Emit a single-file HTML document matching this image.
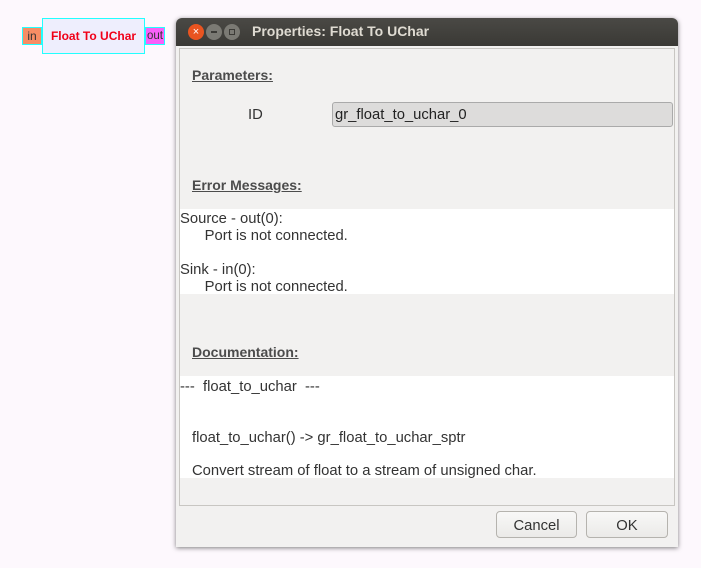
<!DOCTYPE html>
<html><head><style>
body{margin:0;width:701px;height:568px;background:#fdf8fd;position:relative;overflow:hidden;font-family:"Liberation Sans",sans-serif;}
.a{position:absolute;}
.t{font-size:14px;color:#3c3c3c;}
.b{font-size:14.8px;color:#333;}
</style></head><body>
<div class="a" style="left:22px;top:27px;width:18px;height:16px;background:#f78d64;border:1px solid #2ff;font-size:12px;line-height:16px;text-align:center;color:#333">in</div>
<div class="a" style="left:42px;top:18px;width:101px;height:34px;background:#eeeefd;border:1px solid #2ff;font-size:12px;font-weight:bold;color:#f00018;line-height:34px;text-align:center">Float To UChar</div>
<div class="a" style="left:145px;top:27px;width:18px;height:16px;background:#f960f9;border:1px solid #2ff;font-size:11.5px;line-height:16px;text-align:center;color:#333">out</div>

<div class="a" style="left:176px;top:18px;width:502px;height:529px;background:#f2f1f0;border-radius:6px 6px 0 0;box-shadow:0 1px 5px rgba(0,0,0,.5)">
 <div class="a" style="left:0;top:0;width:502px;height:28px;background:linear-gradient(#4a4945,#3a3935);border-radius:6px 6px 0 0"></div>
 <div class="a" style="left:12px;top:6px;width:16px;height:16px;border-radius:50%;background:#e95420;color:#fff;font-size:11px;line-height:16px;text-align:center">×</div>
 <div class="a" style="left:30px;top:6px;width:16px;height:16px;border-radius:50%;background:#7b7a74"><div class="a" style="left:5px;top:7px;width:6px;height:2px;background:#3c3b37"></div></div>
 <div class="a" style="left:48px;top:6px;width:16px;height:16px;border-radius:50%;background:#7b7a74"><div class="a" style="left:5px;top:5px;width:4px;height:4px;border:1px solid #3c3b37"></div></div>
 <div class="a" style="left:76px;top:5px;font-size:14px;font-weight:bold;color:#dfdbd2">Properties: Float To UChar</div>
 <div class="a" style="left:3px;top:30px;width:494px;height:456px;border:1px solid #c8c6c2;background:#f2f1f0">
  <div class="a t" style="left:12px;top:18px;font-weight:bold;text-decoration:underline;color:#4c4c4c">Parameters:</div>
  <div class="a b" style="left:68px;top:58px">ID</div>
  <div class="a" style="left:152px;top:53px;width:339px;height:23px;background:#dddcdb;border:1px solid #aaa;border-radius:3px;font-size:14.8px;line-height:25px;color:#222;text-indent:2px">gr_float_to_uchar_0</div>
  <div class="a t" style="left:12px;top:128px;font-weight:bold;text-decoration:underline;color:#4c4c4c">Error Messages:</div>
  <div class="a" style="left:0;top:160px;width:494px;height:85px;background:#fff"></div>
  <div class="a b" style="left:0;top:162px;line-height:17px">Source - out(0):<br>&nbsp;&nbsp;&nbsp;&nbsp;&nbsp;&nbsp;Port is not connected.<br><br>Sink - in(0):<br>&nbsp;&nbsp;&nbsp;&nbsp;&nbsp;&nbsp;Port is not connected.</div>
  <div class="a t" style="left:12px;top:295px;font-weight:bold;text-decoration:underline;color:#4c4c4c">Documentation:</div>
  <div class="a" style="left:0;top:327px;width:494px;height:102px;background:#fff"></div>
  <div class="a b" style="left:0;top:330px">---&nbsp;&nbsp;float_to_uchar&nbsp;&nbsp;---</div>
  <div class="a b" style="left:12px;top:381px">float_to_uchar() -&gt; gr_float_to_uchar_sptr</div>
  <div class="a b" style="left:12px;top:414px">Convert stream of float to a stream of unsigned char.</div>
 </div>
 <div class="a b" style="left:320px;top:493px;width:79px;height:25px;border:1px solid #b5b3ae;border-radius:4px;background:linear-gradient(#f8f8f7,#ebeae8);text-align:center;line-height:28px">Cancel</div>
 <div class="a b" style="left:410px;top:493px;width:80px;height:25px;border:1px solid #b5b3ae;border-radius:4px;background:linear-gradient(#f8f8f7,#ebeae8);text-align:center;line-height:28px">OK</div>
</div>
</body></html>
